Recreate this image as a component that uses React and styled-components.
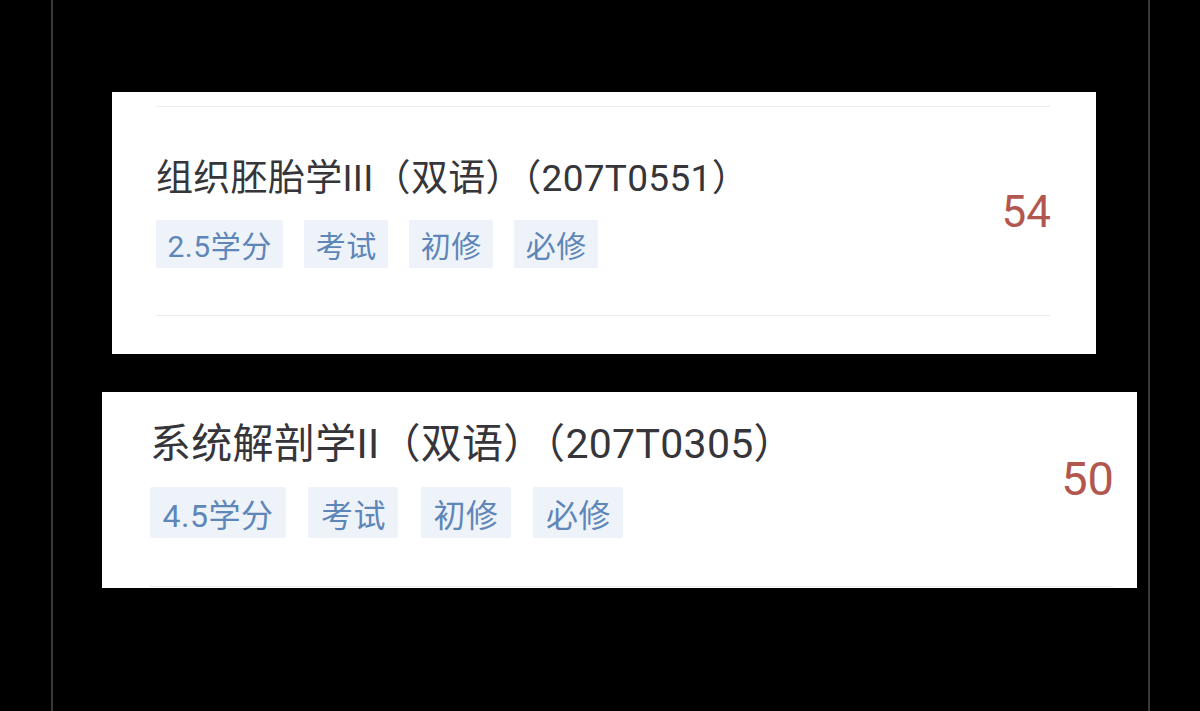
import React from 'react';
import styled, { createGlobalStyle } from 'styled-components';

const GlobalStyle = createGlobalStyle`
  html, body {
    margin: 0;
    padding: 0;
    background: #000;
  }

  body {
    font-family: Roboto, "Noto Sans CJK SC", sans-serif;
  }
`;

const courses = [
  {
    id: '207T0551',
    name: '组织胚胎学III（双语）（207T0551）',
    tags: ['2.5学分', '考试', '初修', '必修'],
    score: 54,
    size: { title: 37, line: 47, tag: 30, tagH: 48, tagPad: 11.5, gap: 21, score: 44 },
    offset: 61,
    width: 984,
    top: 92,
    topRule: true,
    pad: [48, 47],
    side: [44, 46],
    tail: 38,
  },
  {
    id: '207T0305',
    name: '系统解剖学II（双语）（207T0305）',
    tags: ['4.5学分', '考试', '初修', '必修'],
    score: 50,
    size: { title: 41, line: 50, tag: 32, tagH: 51, tagPad: 12.5, gap: 22.5, score: 47 },
    offset: 51,
    width: 1035,
    top: 39,
    topRule: false,
    pad: [13, 48],
    side: [48, 24],
    tail: 1,
  },
];

const CourseCard = ({ name, tags, score, size, offset, width, top, topRule, pad, side, tail }) => (
  <Card $offset={offset} $width={width} $top={top} $side={side} $tail={tail}>
    {topRule && <Rule />}
    <Row $pt={pad[0]} $pb={pad[1]}>
      <Info>
        <Title $size={size.title} $line={size.line}>{name}</Title>
        <Tags $gap={size.gap}>
          {tags.map((t) => (
            <Tag key={t} $size={size.tag} $h={size.tagH} $pad={size.tagPad}>{t}</Tag>
          ))}
        </Tags>
      </Info>
      <Score $size={size.score}>{score}</Score>
    </Row>
    <Rule />
  </Card>
);

const App = () => (
  <>
    <GlobalStyle />
    <Frame>
      {courses.map((c) => (
        <CourseCard key={c.id} {...c} />
      ))}
    </Frame>
  </>
);

const Frame = styled.main`
  box-sizing: border-box;
  width: 1099px;
  min-height: 711px;
  margin-left: 51px;
  padding-top: 1px;
  border-left: 2px solid #3a3a3a;
  border-right: 2px solid #3a3a3a;
  display: flex;
  flex-direction: column;
`;

const Card = styled.section`
  box-sizing: border-box;
  width: ${(p) => p.$width}px;
  margin-left: ${(p) => p.$offset - 2}px;
  margin-top: ${(p) => p.$top - 1}px;
  padding: 14px ${(p) => p.$side[1]}px ${(p) => p.$tail}px ${(p) => p.$side[0]}px;
  background: #fff;
`;

const Rule = styled.hr`
  margin: 0;
  border: 0;
  height: 1px;
  background: #ececee;
`;

const Row = styled.div`
  display: flex;
  align-items: center;
  justify-content: space-between;
  padding: ${(p) => p.$pt}px 0 ${(p) => p.$pb}px;
`;

const Info = styled.div`
  display: flex;
  flex-direction: column;
  gap: 18px;
`;

const Title = styled.h3`
  margin: 0;
  font-family: Roboto, "Noto Sans CJK SC", sans-serif;
  font-weight: 400;
  font-size: ${(p) => p.$size}px;
  line-height: ${(p) => p.$line}px;
  color: #35353a;
  letter-spacing: 0.3px;
`;

const Tags = styled.div`
  display: flex;
  gap: ${(p) => p.$gap}px;
`;

const Tag = styled.span`
  display: inline-flex;
  align-items: center;
  height: ${(p) => p.$h}px;
  padding: 0 ${(p) => p.$pad}px;
  border-radius: 2px;
  background: #eef3fa;
  color: #5f86b8;
  font-family: Roboto, "Noto Sans CJK SC", sans-serif;
  font-size: ${(p) => p.$size}px;
  letter-spacing: 0.5px;
`;

const Score = styled.span`
  font-family: Roboto, sans-serif;
  font-size: ${(p) => p.$size}px;
  color: #b2574f;
  margin-right: -1px;
`;

export default App;
